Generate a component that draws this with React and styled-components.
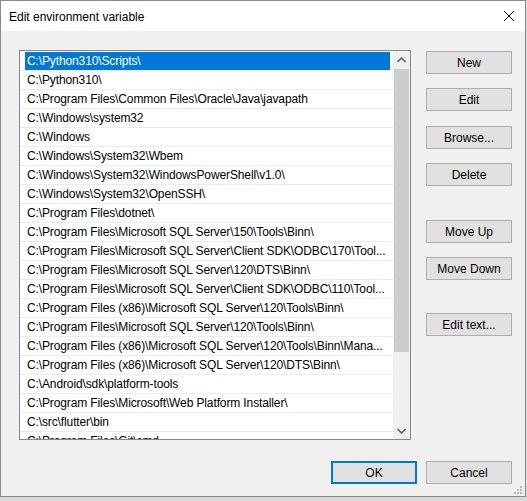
import React from "react";
import styled, { createGlobalStyle } from "styled-components";

const paths = [
  "C:\\Python310\\Scripts\\",
  "C:\\Python310\\",
  "C:\\Program Files\\Common Files\\Oracle\\Java\\javapath",
  "C:\\Windows\\system32",
  "C:\\Windows",
  "C:\\Windows\\System32\\Wbem",
  "C:\\Windows\\System32\\WindowsPowerShell\\v1.0\\",
  "C:\\Windows\\System32\\OpenSSH\\",
  "C:\\Program Files\\dotnet\\",
  "C:\\Program Files\\Microsoft SQL Server\\150\\Tools\\Binn\\",
  "C:\\Program Files\\Microsoft SQL Server\\Client SDK\\ODBC\\170\\Tool...",
  "C:\\Program Files\\Microsoft SQL Server\\120\\DTS\\Binn\\",
  "C:\\Program Files\\Microsoft SQL Server\\Client SDK\\ODBC\\110\\Tool...",
  "C:\\Program Files (x86)\\Microsoft SQL Server\\120\\Tools\\Binn\\",
  "C:\\Program Files\\Microsoft SQL Server\\120\\Tools\\Binn\\",
  "C:\\Program Files (x86)\\Microsoft SQL Server\\120\\Tools\\Binn\\Mana...",
  "C:\\Program Files (x86)\\Microsoft SQL Server\\120\\DTS\\Binn\\",
  "C:\\Android\\sdk\\platform-tools",
  "C:\\Program Files\\Microsoft\\Web Platform Installer\\",
  "C:\\src\\flutter\\bin",
  "C:\\Program Files\\Git\\cmd",
];

const sideButtons = [
  { label: "New", gap: 0 },
  { label: "Edit", gap: 14 },
  { label: "Browse...", gap: 15 },
  { label: "Delete", gap: 14 },
  { label: "Move Up", gap: 34 },
  { label: "Move Down", gap: 14 },
  { label: "Edit text...", gap: 33 },
];

function EditEnvironmentVariable() {
  return (
    <Window>
      <TitleBar>
        <Title>Edit environment variable</Title>
        <CloseButton>
          <svg width="12" height="12" viewBox="0 0 12 12">
            <path d="M1 1 L11 11 M11 1 L1 11" stroke="#000" strokeWidth="1" />
          </svg>
        </CloseButton>
      </TitleBar>

      <Body>
        <Main>
          <ListBox>
            <ListItems>
              {paths.map((p, i) => (
                <Row key={i}>
                  <Item selected={i === 0}>{p}</Item>
                </Row>
              ))}
            </ListItems>
            <ScrollBar>
              <Arrow>
                <svg width="9" height="6" viewBox="0 0 9 6">
                  <path d="M0.5 5 L4.5 1 L8.5 5" fill="none" stroke="#606060" strokeWidth="1.6" />
                </svg>
              </Arrow>
              <Track>
                <Thumb />
              </Track>
              <Arrow>
                <svg width="9" height="6" viewBox="0 0 9 6">
                  <path d="M0.5 1 L4.5 5 L8.5 1" fill="none" stroke="#606060" strokeWidth="1.6" />
                </svg>
              </Arrow>
            </ScrollBar>
          </ListBox>

          <SideButtons>
            {sideButtons.map((b) => (
              <Button key={b.label} gap={b.gap}>
                {b.label}
              </Button>
            ))}
          </SideButtons>
        </Main>

        <Footer>
          <Button primary>OK</Button>
          <Button>Cancel</Button>
        </Footer>
      </Body>

      <Grip>
        <svg width="8" height="8" viewBox="0 0 8 8">
          <rect x="6" y="0" width="2" height="2" fill="#b8b8b8" />
          <rect x="3" y="3" width="2" height="2" fill="#b8b8b8" />
          <rect x="6" y="3" width="2" height="2" fill="#b8b8b8" />
          <rect x="0" y="6" width="2" height="2" fill="#b8b8b8" />
          <rect x="3" y="6" width="2" height="2" fill="#b8b8b8" />
          <rect x="6" y="6" width="2" height="2" fill="#b8b8b8" />
        </svg>
      </Grip>
    </Window>
  );
}

const GlobalStyle = createGlobalStyle`
  html, body {
    margin: 0;
    padding: 0;
    background: #d9d9d9;
  }
  * {
    box-sizing: border-box;
  }
`;

const Window = styled.div`
  position: relative;
  width: 526px;
  height: 497px;
  border: 1px solid #8a8a8a;
  background: #f0f0f0;
  font-family: "Liberation Sans", Arial, sans-serif;
  font-size: 12px;
  color: #000;
  display: flex;
  flex-direction: column;
`;

const TitleBar = styled.div`
  height: 30px;
  background: #fff;
  display: flex;
  align-items: center;
  justify-content: space-between;
  padding-left: 8px;
`;

const Title = styled.div`
  font-size: 12px;
  margin-top: 1px;
`;

const CloseButton = styled.div`
  width: 46px;
  height: 30px;
  display: flex;
  align-items: center;
  justify-content: center;
  margin-right: -7px;
`;

const Body = styled.div`
  flex: 1;
  display: flex;
  flex-direction: column;
  padding: 19px 13px 0 18px;
`;

const Main = styled.div`
  display: flex;
  gap: 15px;
`;

const ListBox = styled.div`
  width: 392px;
  height: 390px;
  border: 1px solid #828790;
  background: #fff;
  display: flex;
  overflow: hidden;
`;

const ListItems = styled.div`
  flex: 1;
  padding-top: 1px;
  overflow: hidden;
`;

const Row = styled.div`
  height: 19px;
  border-bottom: 1px solid #ececec;
  display: flex;
`;

const Item = styled.div`
  flex: 1;
  margin: 0 3px 0 5px;
  padding-left: 2px;
  line-height: 19px;
  letter-spacing: -0.12px;
  white-space: nowrap;
  overflow: hidden;
  background: ${(p) => (p.selected ? "#0078d7" : "transparent")};
  color: ${(p) => (p.selected ? "#fff" : "#000")};
`;

const ScrollBar = styled.div`
  width: 17px;
  background: #f0f0f0;
  display: flex;
  flex-direction: column;
`;

const Arrow = styled.div`
  height: 17px;
  display: flex;
  align-items: center;
  justify-content: center;
`;

const Track = styled.div`
  flex: 1;
  padding: 1px 1px 0 1px;
`;

const Thumb = styled.div`
  height: 283px;
  background: #cdcdcd;
`;

const SideButtons = styled.div`
  display: flex;
  flex-direction: column;
  padding-top: 1px;
`;

const Button = styled.div`
  width: 86px;
  height: 23px;
  margin-top: ${(p) => (p.gap ? p.gap : 0)}px;
  background: #e1e1e1;
  border: ${(p) => (p.primary ? "2px solid #0078d7" : "1px solid #adadad")};
  display: flex;
  align-items: center;
  justify-content: center;
  font-size: 12px;
`;

const Footer = styled.div`
  display: flex;
  justify-content: flex-end;
  gap: 9px;
  margin-top: 21px;
`;

const Grip = styled.div`
  position: absolute;
  right: 3px;
  bottom: 2px;
  display: flex;
`;

export default function App() {
  return (
    <>
      <GlobalStyle />
      <EditEnvironmentVariable />
    </>
  );
}
